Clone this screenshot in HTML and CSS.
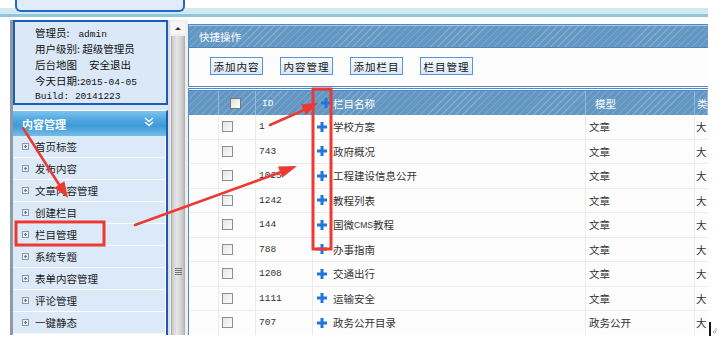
FILE: index.html
```html
<!DOCTYPE html>
<html lang="zh-CN">
<head>
<meta charset="utf-8">
<title>内容管理</title>
<link rel="stylesheet" href="styles.css">
</head>
<body>
<div class="page">
  <div class="frame">
    <div class="topbar"><div class="toptab"></div></div>
    <div class="main">
      <aside class="side">
        <div class="info">
          <div class="line">管理员:<span class="mono gap">admin</span></div>
          <div class="line">用户级别: 超级管理员</div>
          <div class="line">后台地图<span class="sp">安全退出</span></div>
          <div class="line">今天日期:<span class="mono">2015-04-05</span></div>
          <div class="line mono">Build: 20141223</div>
        </div>
        <div class="menu">
          <div class="menu-head">
            <span>内容管理</span>
            <svg class="chev" width="10" height="10" viewBox="0 0 10 10"><polyline points="1,1 5,4.5 9,1" /><polyline points="1,5 5,8.5 9,5" /></svg>
          </div>
          <ul class="items">
            <li><i class="bullet"></i>首页标签</li>
            <li><i class="bullet"></i>发布内容</li>
            <li><i class="bullet"></i>文章内容管理</li>
            <li><i class="bullet"></i>创建栏目</li>
            <li><i class="bullet"></i>栏目管理</li>
            <li><i class="bullet"></i>系统专题</li>
            <li><i class="bullet"></i>表单内容管理</li>
            <li><i class="bullet"></i>评论管理</li>
            <li><i class="bullet"></i>一键静态</li>
          </ul>
        </div>
      </aside>
      <div class="scroll">
        <div class="sbtn"><i class="tri"></i></div>
        <div class="thumb"><i class="grip"></i></div>
      </div>
      <section class="content">
        <div class="quick">
          <div class="qhead">快捷操作</div>
          <div class="qbody">
            <span class="btn">添加内容</span>
            <span class="btn">内容管理</span>
            <span class="btn">添加栏目</span>
            <span class="btn">栏目管理</span>
          </div>
        </div>
        <div class="grid">
          <div class="row head">
            <div class="c"></div>
            <div class="c center"><i class="cb"></i></div>
            <div class="c id">ID</div>
            <div class="c name hname"><svg class="plus" width="10" height="10" viewBox="0 0 10 10"><path d="M3.5 0h3v3.5H10v3H6.5V10h-3V6.5H0v-3h3.5z"/></svg>栏目名称</div>
            <div class="c model">模型</div>
            <div class="c last">类</div>
          </div>
          <div class="row"><div class="c"></div><div class="c"><i class="cb"></i></div><div class="c id">1</div><div class="c name"><svg class="plus" width="10" height="10" viewBox="0 0 10 10"><path d="M3.5 0h3v3.5H10v3H6.5V10h-3V6.5H0v-3h3.5z"/></svg>学校方案</div><div class="c model">文章</div><div class="c last">大</div></div>
          <div class="row"><div class="c"></div><div class="c"><i class="cb"></i></div><div class="c id">743</div><div class="c name"><svg class="plus" width="10" height="10" viewBox="0 0 10 10"><path d="M3.5 0h3v3.5H10v3H6.5V10h-3V6.5H0v-3h3.5z"/></svg>政府概况</div><div class="c model">文章</div><div class="c last">大</div></div>
          <div class="row"><div class="c"></div><div class="c"><i class="cb"></i></div><div class="c id">1025</div><div class="c name"><svg class="plus" width="10" height="10" viewBox="0 0 10 10"><path d="M3.5 0h3v3.5H10v3H6.5V10h-3V6.5H0v-3h3.5z"/></svg>工程建设信息公开</div><div class="c model">文章</div><div class="c last">大</div></div>
          <div class="row"><div class="c"></div><div class="c"><i class="cb"></i></div><div class="c id">1242</div><div class="c name"><svg class="plus" width="10" height="10" viewBox="0 0 10 10"><path d="M3.5 0h3v3.5H10v3H6.5V10h-3V6.5H0v-3h3.5z"/></svg>教程列表</div><div class="c model">文章</div><div class="c last">大</div></div>
          <div class="row"><div class="c"></div><div class="c"><i class="cb"></i></div><div class="c id">144</div><div class="c name"><svg class="plus" width="10" height="10" viewBox="0 0 10 10"><path d="M3.5 0h3v3.5H10v3H6.5V10h-3V6.5H0v-3h3.5z"/></svg>国微<span class="sm">CMS</span>教程</div><div class="c model">文章</div><div class="c last">大</div></div>
          <div class="row"><div class="c"></div><div class="c"><i class="cb"></i></div><div class="c id">788</div><div class="c name"><svg class="plus" width="10" height="10" viewBox="0 0 10 10"><path d="M3.5 0h3v3.5H10v3H6.5V10h-3V6.5H0v-3h3.5z"/></svg>办事指南</div><div class="c model">文章</div><div class="c last">大</div></div>
          <div class="row"><div class="c"></div><div class="c"><i class="cb"></i></div><div class="c id">1208</div><div class="c name"><svg class="plus" width="10" height="10" viewBox="0 0 10 10"><path d="M3.5 0h3v3.5H10v3H6.5V10h-3V6.5H0v-3h3.5z"/></svg>交通出行</div><div class="c model">文章</div><div class="c last">大</div></div>
          <div class="row"><div class="c"></div><div class="c"><i class="cb"></i></div><div class="c id">1111</div><div class="c name"><svg class="plus" width="10" height="10" viewBox="0 0 10 10"><path d="M3.5 0h3v3.5H10v3H6.5V10h-3V6.5H0v-3h3.5z"/></svg>运输安全</div><div class="c model">文章</div><div class="c last">大</div></div>
          <div class="row"><div class="c"></div><div class="c"><i class="cb"></i></div><div class="c id">707</div><div class="c name"><svg class="plus" width="10" height="10" viewBox="0 0 10 10"><path d="M3.5 0h3v3.5H10v3H6.5V10h-3V6.5H0v-3h3.5z"/></svg>政务公开目录</div><div class="c model">政务公开</div><div class="c last">大</div></div>
        </div>
      </section>
    </div>
  </div>
  <svg class="annot" width="728" height="345" viewBox="0 0 728 345">
    <g fill="none" stroke="#ec3a33" stroke-width="3">
      <rect x="16" y="222" width="88" height="23"/>
      <rect x="313" y="89" width="18" height="160"/>
    </g>
    <g stroke="#ec3a33" stroke-width="2.5" stroke-linecap="round">
      <line x1="23" y1="128" x2="60" y2="186"/>
      <line x1="135" y1="225" x2="281" y2="172"/>
      <line x1="270" y1="125" x2="304" y2="110"/>
    </g>
    <g fill="#ec3a33">
      <polygon points="68,198 54.3,187.8 64.4,181.3"/>
      <polygon points="297,166 282.2,177.8 278.0,166.6"/>
      <polygon points="318,103 306.0,115.1 301.0,104.2"/>
    </g>
    <line x1="710" y1="322" x2="710" y2="336" stroke="#111" stroke-width="2"/>
    <path d="M716 328v4h-3m1.5 -1.5l-1.5 1.5 1.5 1.5" fill="none" stroke="#999" stroke-width="0.8"/>
  </svg>
</div>
</body>
</html>
```

FILE: styles.css
```css
* { box-sizing: border-box; margin: 0; padding: 0; }
body {
  margin: 0;
  background: #fff;
  font-family: "Noto Sans CJK SC", "Noto Sans", sans-serif;
  font-size: 10.5px;
  color: #222;
}
.page { position: relative; width: 728px; height: 345px; overflow: hidden; }
.frame { width: 708px; height: 345px; overflow: hidden; }

/* top strip */
.topbar {
  height: 20px;
  background: linear-gradient(to bottom, #fff 0, #fff 8px, #d3e9f1 8px, #d3e9f1 14px, #8fc7da 14px, #8fc7da 17px, #fff 17px);
}
.toptab {
  margin-left: 15px;
  width: 170px;
  height: 12px;
  background: #e0edf9;
  border: 2px solid #2366c6;
  border-top: none;
  border-radius: 0 0 6px 6px;
}

.main { display: flex; height: 315px; }
.main > * { flex: none; }

/* sidebar */
.side {
  margin-left: 10px;
  width: 158px;
  border-left: 3px solid #8e9aa6;
  background: #dbe8f7;
  display: flex;
  flex-direction: column;
}
.info {
  height: 85px;
  border: 2px solid #1b5cb8;
  background: #dbe8f7;
  padding: 3px 0 0 20px;
  color: #111;
}
.info .line { height: 16px; line-height: 16px; white-space: nowrap; }
.mono { font-family: "Liberation Mono", monospace; font-size: 9.5px; }
.mono.gap { margin-left: 9px; }
.info .line .sp { margin-left: 12px; }

.menu {
  flex: 1;
  margin-top: 5px;
  background: #fff;
  border-right: 2px solid #1b5cb8;
  border-top: 1px solid #fff;
}
.menu-head {
  height: 25px;
  display: flex;
  align-items: center;
  justify-content: space-between;
  padding: 0 12px 0 9px;
  color: #fff;
  font-weight: bold;
  font-size: 11px;
  background: linear-gradient(to bottom, #7cc3ec 0%, #49a4de 40%, #3f9bd8 60%, #74bde9 100%);
}
.chev { display: block; margin-top: -4px; }
.chev polyline { fill: none; stroke: #fff; stroke-width: 1.4; }
.items { list-style: none; margin-right: 1px; }
.items li {
  height: 22px;
  border-bottom: 1px solid #fff;
  background: #dce9f8;
  display: flex;
  align-items: center;
  padding-left: 9px;
  color: #1a1a1a;
}
.bullet {
  width: 7px;
  height: 7px;
  margin-right: 6px;
  border: 1px solid #8a97a8;
  background: #eef2f7 radial-gradient(circle, #707a88 0, #707a88 1px, transparent 1.5px);
  display: block;
}

/* scrollbar */
.scroll {
  width: 20px;
  background: #efefef;
  border-left: 2px solid #dcdcdc;
  padding: 2px 3px 0 1px;
  display: flex;
  flex-direction: column;
}
.sbtn {
  height: 12px;
  background: #f6f6f6;
  display: flex;
  align-items: center;
  justify-content: center;
}
.tri {
  display: block;
  width: 0;
  height: 0;
  border-left: 3px solid transparent;
  border-right: 3px solid transparent;
  border-bottom: 3px solid #333;
}
.thumb {
  flex: 1;
  margin-top: 2px;
  border-left: 1px solid #a9a9a9;
  border-right: 1px solid #b0b0b0;
  background: linear-gradient(to right, #c9c9c9, #e6e6e6 40%, #d6d6d6 70%, #bdbdbd);
  position: relative;
}
.grip {
  position: absolute;
  left: 3px;
  top: 232px;
  width: 7px;
  height: 7px;
  background: repeating-linear-gradient(to bottom, #777 0, #777 1px, transparent 1px, transparent 2px);
}

/* content */
.content { width: 520px; padding-top: 4px; overflow: hidden; }
.quick {
  border: 1px solid #4f8ad0;
  border-right: none;
  background: #fdfdfd;
}
.qhead {
  height: 23px;
  line-height: 22px;
  padding-left: 10px;
  color: #fff;
  border-top: 1px solid #a9c6e4;
  border-bottom: 1px solid #4f86c2;
  background: repeating-linear-gradient(135deg, #80abd0 0, #80abd0 1px, #6497c1 1px, #6497c1 5px);
}
.qbody {
  height: 38px;
  padding: 9px 0 0 21px;
  display: flex;
  gap: 17px;
  align-items: flex-start;
}
.btn {
  width: 53px;
  height: 18px;
  border: 1px solid #5794dc;
  background: linear-gradient(to bottom, #fafcfe, #dbe7f5);
  color: #111;
  display: flex;
  align-items: center;
  justify-content: center;
  letter-spacing: 1px;
}

.grid {
  margin-top: 1px;
  border-top: 3px double #4f8ad0;
  border-left: 1px solid #4f8ad0;
  background: #fdfdfd;
}
.row {
  display: grid;
  grid-template-columns: 30px 37px 57px 273px 109px 13px;
  height: 24.5px;
  border-bottom: 1px solid #ebebeb;
  color: #333;
}
.row .c {
  border-right: 1px solid #ececec;
  display: flex;
  align-items: center;
  padding-left: 3px;
  white-space: nowrap;
  overflow: hidden;
}
.row.head {
  height: 24px;
  color: #fff;
  border-bottom: none;
  background: repeating-linear-gradient(135deg, #80abd0 0, #80abd0 1px, #6497c1 1px, #6497c1 5px);
}
.row.head .c { border-right: 1px solid #95b9d8; }
.row .center { justify-content: center; padding-left: 0; padding-right: 4px; }
.row .id { font-family: "Liberation Mono", monospace; font-size: 9.5px; padding-left: 3px; }
.row.head .id { padding-left: 6px; }
.row .name { padding-left: 4px; }
.row.head .hname { padding-left: 8px; }
.plus { display: block; margin-right: 6px; fill: #1c79db; flex: none; }
.row.head .plus { margin-right: 2px; }
.row .model { padding-left: 3px; }
.row.head .model { padding-left: 9px; }
.row .last { padding-left: 1px; border-right: none; overflow: visible; }
.row.head .last { padding-left: 2px; }
.sm { font-family: "Liberation Sans", sans-serif; font-size: 8.5px; }
.cb {
  display: block;
  width: 11px;
  height: 11px;
  border: 1px solid #8f8f8f;
  background: linear-gradient(135deg, #e6e6e6, #fafafa);
}
.row.head .cb { border-color: #777; background: linear-gradient(135deg, #dcdcdc, #fff); }

.annot { position: absolute; left: 0; top: 0; pointer-events: none; }
```
